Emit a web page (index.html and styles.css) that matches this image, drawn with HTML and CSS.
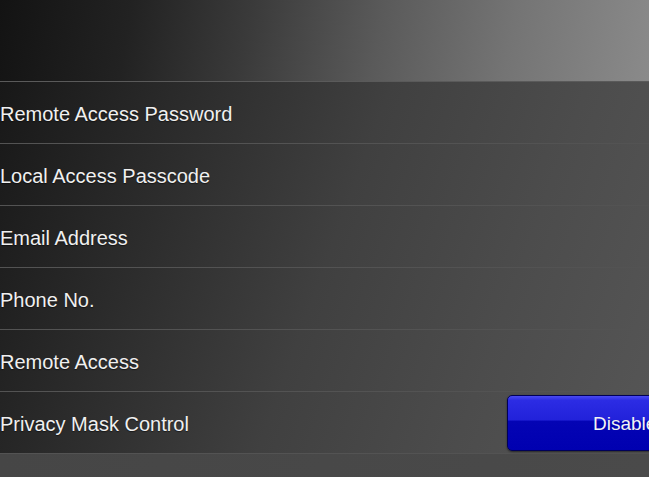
FILE: index.html
```html
<!DOCTYPE html>
<html>
<head>
<meta charset="utf-8">
<link rel="stylesheet" href="styles.css">
</head>
<body>
<div class="page">
  <div class="header"></div>
  <div class="list">
    <div class="row"><span class="label">Remote Access Password</span></div>
    <div class="row"><span class="label">Local Access Passcode</span></div>
    <div class="row"><span class="label">Email Address</span></div>
    <div class="row"><span class="label">Phone No.</span></div>
    <div class="row"><span class="label">Remote Access</span></div>
    <div class="row"><span class="label">Privacy Mask Control</span><button class="btn">Disabled</button></div>
  </div>
  <div class="footer"></div>
</div>
</body>
</html>
```
FILE: styles.css
```css
html, body {
  margin: 0;
  padding: 0;
  background: #474747;
  overflow: hidden;
}
.page {
  width: 649px;
  height: 477px;
  overflow: hidden;
  display: flex;
  flex-direction: column;
  font-family: "Liberation Sans", Arial, sans-serif;
}
.header {
  height: 81px;
  flex: none;
  background: linear-gradient(100deg, #131313 0%, #222 20%, #3a3a3a 38%, #5a5a5a 58%, #747474 78%, #8a8a8a 100%);
  border-bottom: 1px solid #5a5a5a;
}
.list {
  flex: none;
  background: linear-gradient(110deg, #181818 0%, #2c2c2c 25%, #404040 50%, #4c4c4c 75%, #565656 100%);
}
.row {
  height: 61px;
  border-bottom: 1px solid #535353;
  display: flex;
  align-items: center;
  justify-content: space-between;
}
.label {
  color: #f0f0f0;
  font-size: 20px;
  text-shadow: 0 1px 1px rgba(0,0,0,0.5);
  padding-top: 4px;
  white-space: nowrap;
}
.btn {
  flex: none;
  width: 248px;
  height: 56px;
  margin-right: -106px;
  margin-top: 0;
  border: 1px solid #000058;
  border-radius: 5px;
  background: linear-gradient(to bottom, #4a4af2 0%, #2c2ce4 8%, #2222da 44%, #0404b4 47%, #0000b0 100%);
  color: #f2f2f2;
  font-family: "Liberation Sans", Arial, sans-serif;
  font-size: 19px;
  text-align: left;
  padding: 2px 0 0 85px;
  white-space: nowrap;
  box-shadow: 0 1px 2px rgba(0,0,0,0.5);
}
.footer {
  flex: 1;
  background: linear-gradient(100deg, #464646 0%, #4a4a4a 100%);
}
```
